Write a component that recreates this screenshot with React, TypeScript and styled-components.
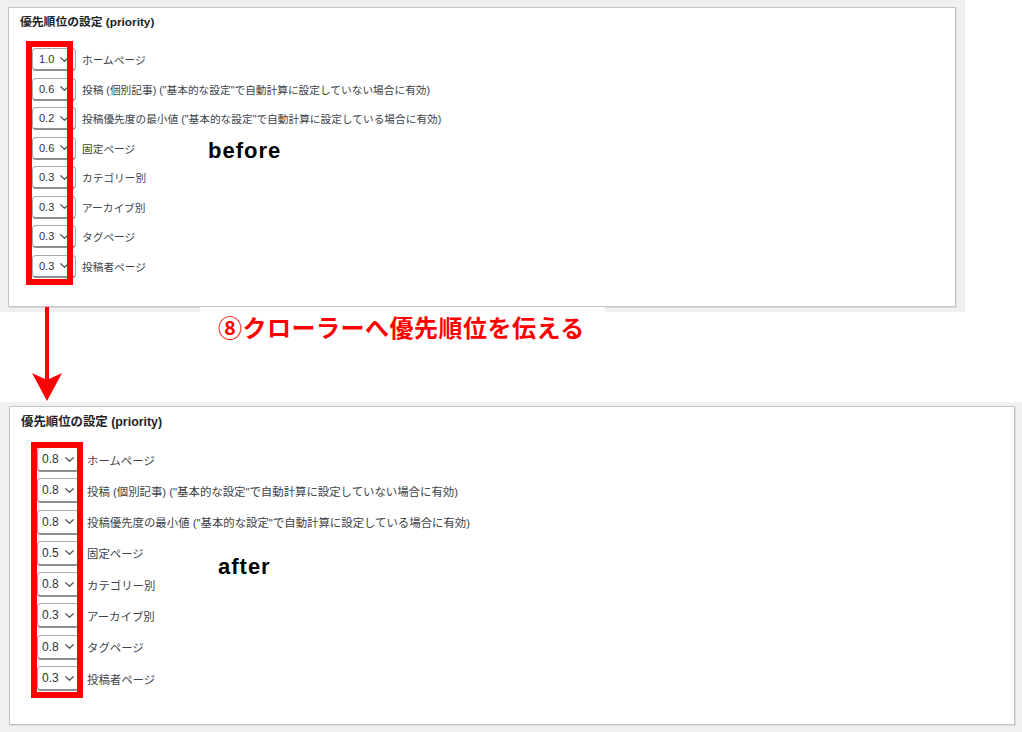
import React from 'react'
import styled, { createGlobalStyle } from 'styled-components'

const GlobalStyle = createGlobalStyle`
  html, body {
    margin: 0;
    padding: 0;
    background: #fff;
  }
  body {
    width: 1022px;
    height: 732px;
    overflow: hidden;
    font-family: "Liberation Sans", "Noto Sans CJK JP", sans-serif;
  }
`

type Metrics = {
  width: number
  height: number
  pad: string
  titleSize: number
  titlePad: string
  listPad: string
  selectW: number
  selectH: number
  selectPad: number
  valueSize: number
  rowGap: number
  textSize: number
  labelGap: number
  frame: { top: number; left: number; width: number; bottom: number }
  tag: { text: string; left: number; top: number }
}

const LABELS = [
  'ホームページ',
  '投稿 (個別記事) ("基本的な設定"で自動計算に設定していない場合に有効)',
  '投稿優先度の最小値 ("基本的な設定"で自動計算に設定している場合に有効)',
  '固定ページ',
  'カテゴリー別',
  'アーカイブ別',
  'タグページ',
  '投稿者ページ',
]

const BEFORE: Metrics = {
  width: 965,
  height: 312,
  pad: '7px 9px 5px 8px',
  titleSize: 11.8,
  titlePad: '7px 0 0 11px',
  listPad: '18px 0 0 23px',
  selectW: 44,
  selectH: 23,
  selectPad: 6,
  valueSize: 11,
  rowGap: 6.5,
  textSize: 10.7,
  labelGap: 6,
  frame: { top: -7, left: -6, width: 47, bottom: -7.5 },
  tag: { text: 'before', left: 199, top: 132 },
}

const AFTER: Metrics = {
  width: 1022,
  height: 330,
  pad: '4px 7px 7px 9px',
  titleSize: 12.4,
  titlePad: '7.5px 0 0 11px',
  listPad: '17.5px 0 0 27px',
  selectW: 42,
  selectH: 25,
  selectPad: 4,
  valueSize: 12,
  rowGap: 6.3,
  textSize: 11.4,
  labelGap: 8,
  frame: { top: -5, left: -6, width: 52, bottom: -7 },
  tag: { text: 'after', left: 208, top: 148.5 },
}

const Page = styled.div`
  display: flex;
  flex-direction: column;
  width: 1022px;
  height: 732px;
`

const Shot = styled.div<{ $w: number; $h: number; $pad: string }>`
  box-sizing: border-box;
  width: ${p => p.$w}px;
  height: ${p => p.$h}px;
  padding: ${p => p.$pad};
  background: #f0f0f1;
  display: flex;
`

const Panel = styled.div`
  position: relative;
  flex: 1;
  background: #fff;
  border: 1px solid #c3c4c7;
  box-shadow: 1px 1px 0 #dcdcde;
`

const Title = styled.h2<{ $size: number; $pad: string }>`
  margin: 0;
  padding: ${p => p.$pad};
  font-size: ${p => p.$size}px;
  line-height: 15px;
  font-weight: 700;
  color: #1d2327;
`

const List = styled.div<{ $pad: string }>`
  padding: ${p => p.$pad};
`

const Rows = styled.div<{ $gap: number }>`
  position: relative;
  display: flex;
  flex-direction: column;
  gap: ${p => p.$gap}px;
`

const Row = styled.div<{ $gap: number }>`
  display: flex;
  align-items: center;
  gap: ${p => p.$gap}px;
`

const Select = styled.div<{ $w: number; $h: number; $pad: number; $size: number }>`
  box-sizing: border-box;
  width: ${p => p.$w}px;
  height: ${p => p.$h}px;
  padding: 0 0 0 ${p => p.$pad}px;
  display: flex;
  align-items: center;
  gap: 6px;
  background: #fff;
  border: 1px solid #a7aaad;
  border-bottom: 2px solid #8c8f94;
  border-radius: 4px;
  color: #2c3338;
  font-size: ${p => p.$size}px;
  font-family: "Liberation Sans", sans-serif;
`

const Label = styled.span<{ $size: number }>`
  white-space: nowrap;
  color: #3c434a;
  font-size: ${p => p.$size}px;
`

// red marker drawn over the select column
const Frame = styled.div<{ $top: number; $left: number; $width: number; $bottom: number }>`
  position: absolute;
  top: ${p => p.$top}px;
  left: ${p => p.$left}px;
  bottom: ${p => p.$bottom}px;
  width: ${p => p.$width}px;
  box-sizing: border-box;
  border: 6px solid #ff0000;
  pointer-events: none;
`

const Tag = styled.div<{ $left: number; $top: number }>`
  position: absolute;
  left: ${p => p.$left}px;
  top: ${p => p.$top}px;
  font-family: "Liberation Sans", sans-serif;
  font-size: 22px;
  line-height: 22px;
  font-weight: 700;
  letter-spacing: 1px;
  color: #000;
`

const Between = styled.div`
  position: relative;
  display: flex;
  align-items: flex-start;
  height: 95px;
  margin-top: -5px;
`

const Arrow = styled.svg`
  flex: none;
  margin-left: 31px;
`

const Caption = styled.div`
  margin-left: 137px;
  width: 405px;
  height: 40px;
  box-sizing: border-box;
  padding-left: 18px;
  background: #fff;
  color: #ff0000;
  font-family: "Noto Sans CJK JP", sans-serif;
  font-size: 24px;
  line-height: 40px;
  font-weight: 700;
  letter-spacing: 0.5px;
  white-space: nowrap;
`

const Chevron: React.FC = () => (
  <svg width="9" height="5" viewBox="0 0 9 5" fill="none">
    <path d="M0.7 0.7 L4.5 4.3 L8.3 0.7" stroke="#50575e" strokeWidth="1.2" strokeLinecap="round" strokeLinejoin="round" />
  </svg>
)

const Screenshot: React.FC<{ m: Metrics; values: string[] }> = ({ m, values }) => (
  <Shot $w={m.width} $h={m.height} $pad={m.pad}>
    <Panel>
      <Title $size={m.titleSize} $pad={m.titlePad}>優先順位の設定 (priority)</Title>
      <List $pad={m.listPad}>
        <Rows $gap={m.rowGap}>
          {LABELS.map((label, i) => (
            <Row key={label} $gap={m.labelGap}>
              <Select $w={m.selectW} $h={m.selectH} $pad={m.selectPad} $size={m.valueSize}>
                <span>{values[i]}</span>
                <Chevron />
              </Select>
              <Label $size={m.textSize}>{label}</Label>
            </Row>
          ))}
          <Frame $top={m.frame.top} $left={m.frame.left} $width={m.frame.width} $bottom={m.frame.bottom} />
        </Rows>
      </List>
      <Tag $left={m.tag.left} $top={m.tag.top}>{m.tag.text}</Tag>
    </Panel>
  </Shot>
)

export default function App() {
  return (
    <>
      <GlobalStyle />
      <Page>
        <Screenshot m={BEFORE} values={['1.0', '0.6', '0.2', '0.6', '0.3', '0.3', '0.3', '0.3']} />
        <Between>
          <Arrow width="32" height="95" viewBox="0 0 32 95">
            <rect x="14" y="0" width="4" height="76" fill="#ff0000" />
            <path d="M1 66 L16 73 L31 66 L16 94 Z" fill="#ff0000" />
          </Arrow>
          <Caption>⑧クローラーへ優先順位を伝える</Caption>
        </Between>
        <Screenshot m={AFTER} values={['0.8', '0.8', '0.8', '0.5', '0.8', '0.3', '0.8', '0.3']} />
      </Page>
    </>
  )
}
